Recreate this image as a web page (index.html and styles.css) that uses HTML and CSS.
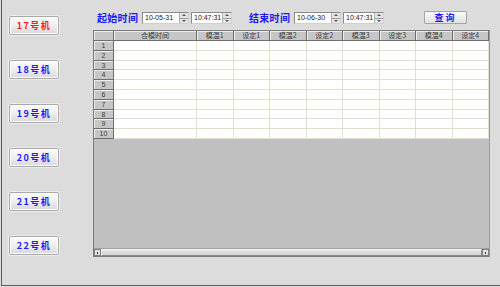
FILE: index.html
```html
<!DOCTYPE html>
<html>
<head>
<meta charset="utf-8">
<link rel="stylesheet" href="styles.css">
</head>
<body>
<div class="frame">
  <div class="sidebar">
    <div class="mbtn red">17号机</div>
    <div class="mbtn">18号机</div>
    <div class="mbtn">19号机</div>
    <div class="mbtn">20号机</div>
    <div class="mbtn">21号机</div>
    <div class="mbtn">22号机</div>
  </div>
  <div class="main">
    <div class="toolbar">
      <span class="label">起始时间</span>
      <span class="field date">10-05-31<span class="spin"><i class="up"></i><i class="dn"></i></span></span>
      <span class="field time">10:47:31<span class="spin"><i class="up"></i><i class="dn"></i></span></span>
      <span class="label second">结束时间</span>
      <span class="field date">10-06-30<span class="spin"><i class="up"></i><i class="dn"></i></span></span>
      <span class="field time">10:47:31<span class="spin"><i class="up"></i><i class="dn"></i></span></span>
      <span class="query">查询</span>
    </div>
    <div class="gridbox">
      <div class="grid">
        <div class="hc"></div><div class="hc">合模时间</div><div class="hc">模温1</div><div class="hc">设定1</div><div class="hc">模温2</div><div class="hc">设定2</div><div class="hc">模温3</div><div class="hc">设定3</div><div class="hc">模温4</div><div class="hc">设定4</div>
        <div class="rh">1</div><div class="c"></div><div class="c"></div><div class="c"></div><div class="c"></div><div class="c"></div><div class="c"></div><div class="c"></div><div class="c"></div><div class="c"></div>
        <div class="rh">2</div><div class="c"></div><div class="c"></div><div class="c"></div><div class="c"></div><div class="c"></div><div class="c"></div><div class="c"></div><div class="c"></div><div class="c"></div>
        <div class="rh">3</div><div class="c"></div><div class="c"></div><div class="c"></div><div class="c"></div><div class="c"></div><div class="c"></div><div class="c"></div><div class="c"></div><div class="c"></div>
        <div class="rh">4</div><div class="c"></div><div class="c"></div><div class="c"></div><div class="c"></div><div class="c"></div><div class="c"></div><div class="c"></div><div class="c"></div><div class="c"></div>
        <div class="rh">5</div><div class="c"></div><div class="c"></div><div class="c"></div><div class="c"></div><div class="c"></div><div class="c"></div><div class="c"></div><div class="c"></div><div class="c"></div>
        <div class="rh">6</div><div class="c"></div><div class="c"></div><div class="c"></div><div class="c"></div><div class="c"></div><div class="c"></div><div class="c"></div><div class="c"></div><div class="c"></div>
        <div class="rh">7</div><div class="c"></div><div class="c"></div><div class="c"></div><div class="c"></div><div class="c"></div><div class="c"></div><div class="c"></div><div class="c"></div><div class="c"></div>
        <div class="rh">8</div><div class="c"></div><div class="c"></div><div class="c"></div><div class="c"></div><div class="c"></div><div class="c"></div><div class="c"></div><div class="c"></div><div class="c"></div>
        <div class="rh">9</div><div class="c"></div><div class="c"></div><div class="c"></div><div class="c"></div><div class="c"></div><div class="c"></div><div class="c"></div><div class="c"></div><div class="c"></div>
        <div class="rh">10</div><div class="c"></div><div class="c"></div><div class="c"></div><div class="c"></div><div class="c"></div><div class="c"></div><div class="c"></div><div class="c"></div><div class="c"></div>
      </div>
      <div class="empty"></div>
      <div class="hscroll">
        <span class="arrow left"></span>
        <span class="thumb"></span>
        <span class="arrow right"></span>
      </div>
    </div>
  </div>
</div>
</body>
</html>
```

FILE: styles.css
```css
* { box-sizing: border-box; }
html, body {
  margin: 0;
  padding: 0;
  width: 500px;
  height: 287px;
  background: #dcdcdc;
  overflow: hidden;
  font-family: "Noto Sans CJK SC", "Liberation Sans", sans-serif;
}
.frame {
  display: flex;
  width: 500px;
  height: 286px;
  margin-left: 1px;
  border-left: 1px solid #5c5c5c;
  border-bottom: 1px solid #5c5c5c;
  background: #dcdcdc;
}
.sidebar {
  width: 91px;
  flex: none;
  display: flex;
  flex-direction: column;
  gap: 25px;
  padding: 16px 0 0 7px;
}
.mbtn {
  width: 50px;
  height: 19px;
  border: 1px solid #a9a9a9;
  border-radius: 2px;
  background: linear-gradient(#fbfbfb, #f0f0f0 45%, #d9d9d9);
  box-shadow: 0 0 0 1px #ececec, inset 0 0 0 1px #ffffff;
  color: #1a1aff;
  font-weight: 700;
  font-size: 9px;
  letter-spacing: 1.5px;
  line-height: 17px;
  text-align: center;
}
.mbtn.red { color: #ff1a1a; }
.main {
  flex: none;
  width: 398px;
  display: flex;
  flex-direction: column;
}
.toolbar {
  height: 30px;
  display: flex;
  align-items: flex-start;
  padding-left: 4px;
}
.label {
  margin-top: 11px;
  color: #1a1aee;
  font-weight: 700;
  font-size: 10px;
  line-height: 13px;
  letter-spacing: 0.3px;
  width: 45px;
}
.label.second { margin-left: 17px; width: 45px; }
.field {
  margin-top: 12px;
  height: 12px;
  background: #fff;
  border: 1px solid #8a8a8a;
  border-right-color: #d0d0d0;
  border-bottom-color: #d0d0d0;
  font-family: "Liberation Sans", sans-serif;
  font-size: 7px;
  line-height: 10px;
  color: #222;
  padding-left: 2px;
  display: flex;
  justify-content: space-between;
}
.field.date { width: 47px; }
.field.time { width: 41px; margin-left: 2px; }
.spin {
  width: 9px;
  height: 10px;
  display: flex;
  flex-direction: column;
  background: #e4e4e4;
  border-left: 1px solid #b0b0b0;
}
.spin i {
  flex: 1;
  display: block;
  position: relative;
}
.spin i.up { border-bottom: 1px solid #9a9a9a; }
.spin i::after {
  content: "";
  position: absolute;
  left: 2px;
  top: 1px;
  border-left: 2px solid transparent;
  border-right: 2px solid transparent;
}
.spin i.up::after { border-bottom: 2px solid #555; }
.spin i.dn::after { border-top: 2px solid #555; }
.query {
  margin-left: 40px;
  margin-top: 11px;
  width: 43px;
  height: 13px;
  border: 1px solid #a4a4a4;
  border-radius: 1px;
  background: linear-gradient(#f8f8f8, #e2e2e2);
  color: #1a1aee;
  font-weight: 700;
  font-size: 9px;
  line-height: 11px;
  letter-spacing: 2px;
  text-align: center;
}
.gridbox {
  width: 397px;
  height: 227px;
  border: 1px solid #7a7a7a;
  border-right-color: #9a9a9a;
  display: flex;
  flex-direction: column;
  background: #c0c0c0;
}
.grid {
  display: grid;
  grid-template-columns: 20px 83px repeat(8, 1fr);
  grid-template-rows: 10px repeat(10, 9.8px);
  flex: none;
}
.hc, .rh {
  background: #c6c6c6;
  border-right: 1px solid #6e6e6e;
  border-bottom: 1px solid #6e6e6e;
  box-shadow: inset 1px 1px 0 #ececec;
  color: #3c3c3c;
  font-size: 7px;
  line-height: 9px;
  text-align: center;
  font-family: "Noto Sans CJK SC", "Liberation Sans", sans-serif;
  overflow: hidden;
  white-space: nowrap;
}
.rh {
  font-family: "Liberation Sans", sans-serif;
  line-height: 9px;
  font-size: 7px;
}
.c {
  background: #fff;
  border-right: 1px solid #e2dfcc;
  border-bottom: 1px solid #e2dfcc;
}
.empty {
  flex: 1;
  background: #c0c0c0;
}
.hscroll {
  height: 8px;
  display: flex;
  background: #d6d6d6;
  border-top: 1px solid #a0a0a0;
}
.arrow {
  width: 7px;
  background: #e2e2e2;
  border: 1px solid #7e7e7e;
  position: relative;
}
.arrow::after {
  content: "";
  position: absolute;
  left: 2px;
  top: 2px;
  width: 1px;
  height: 2px;
  background: #333;
}
.thumb {
  flex: 1;
  background: linear-gradient(#e6e6e6, #d2d2d2);
  border: 1px solid #8a8a8a;
  border-top-color: #f4f4f4;
  border-left-color: #f4f4f4;
}
```
